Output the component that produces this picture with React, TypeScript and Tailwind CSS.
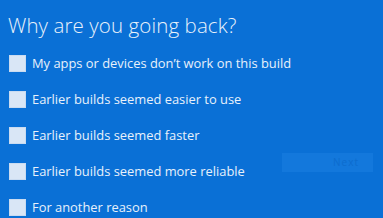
import React from "react";

const items = [
  "My apps or devices don\u2019t work on this build",
  "Earlier builds seemed easier to use",
  "Earlier builds seemed faster",
  "Earlier builds seemed more reliable",
  "For another reason",
];

export default function App() {
  return (
    <div
      className="w-[383px] h-[218px] overflow-hidden bg-[#0a70d6] text-[#e8f1fb] pl-[9px]"
      style={{ fontFamily: '"Open Sans", "Noto Sans", sans-serif' }}
    >
      <div className="pt-[12px] h-[55px]">
        <h1 className="text-[20.5px] leading-[26px] font-light tracking-[0.1px] -ml-[1px]">
          Why are you going back?
        </h1>
      </div>
      <div className="flex flex-col gap-[19px]">
        {items.map((t, i) => (
          <div key={i} className="flex items-center h-[17px]">
            <div className="w-[17px] h-[17px] bg-[#d9e6f6] border border-[#c9dbf1] shrink-0" />
            <span className="ml-[6px] text-[12.9px] leading-[17px] whitespace-nowrap">{t}</span>
            {i === 3 && (
              <div className="ml-auto mr-[10px] -mt-[18px] w-[91px] h-[19px] bg-[#1378dc] flex items-center justify-end pr-[14px]">
                <span className="text-[10px] tracking-[1px] text-[#0c6acb] opacity-80">Next</span>
              </div>
            )}
          </div>
        ))}
      </div>
    </div>
  );
}
